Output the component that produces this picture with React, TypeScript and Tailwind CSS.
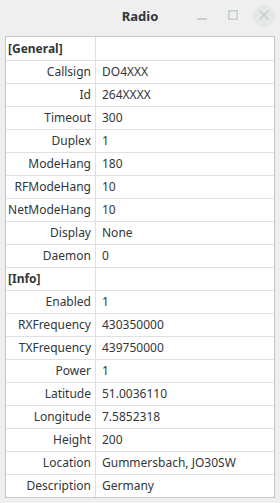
const rows: [string, string, boolean?][] = [
  ['[General]', '', true],
  ['Callsign', 'DO4XXX'],
  ['Id', '264XXXX'],
  ['Timeout', '300'],
  ['Duplex', '1'],
  ['ModeHang', '180'],
  ['RFModeHang', '10'],
  ['NetModeHang', '10'],
  ['Display', 'None'],
  ['Daemon', '0'],
  ['[Info]', '', true],
  ['Enabled', '1'],
  ['RXFrequency', '430350000'],
  ['TXFrequency', '439750000'],
  ['Power', '1'],
  ['Latitude', '51.0036110'],
  ['Longitude', '7.5852318'],
  ['Height', '200'],
  ['Location', 'Gummersbach, JO30SW'],
  ['Description', 'Germany'],
];

export default function App() {
  return (
    <div className="w-[280px] h-[503px] bg-[#efefef] text-[#31363b] font-['Noto_Sans',sans-serif] overflow-hidden">
      {/* Titelleiste */}
      <div className="relative h-[36px] flex justify-center pt-[6px]">
        <span className="text-[13px] font-bold leading-[20px]">Radio</span>
        {/* Fensterknoepfe */}
        <svg width="90" height="34" viewBox="0 0 90 34" className="absolute right-0 top-0">
          <rect x="7" y="18" width="10" height="2" fill="#c5ced2" />
          <rect x="38.75" y="10.75" width="8.5" height="8.5" fill="none" stroke="#c5ced2" strokeWidth="1.5" />
          <circle cx="74" cy="16" r="11" fill="#e6e8e8" />
          <path d="M69.5 10.5L78.5 19.5M78.5 10.5L69.5 19.5" stroke="#c5ced2" strokeWidth="1.6" />
        </svg>
      </div>
      {/* Tabelle */}
      <div className="mx-[5px] border border-[#c8c8c8] bg-white">
        {rows.map(([k, v, head], i) => (
          <div
            key={i}
            className={`flex h-[23px] text-[12px] ${i > 0 ? 'border-t border-[#e0e0e0]' : ''}`}
          >
            <div
              className={`w-[90px] shrink-0 border-r border-[#e0e0e0] flex items-center ${
                head ? 'justify-start pl-[2px] font-bold' : 'justify-end pr-[4px]'
              }`}
            >
              {k}
            </div>
            <div className="flex-1 flex items-center pl-[6px]">{v}</div>
          </div>
        ))}
      </div>
    </div>
  );
}
